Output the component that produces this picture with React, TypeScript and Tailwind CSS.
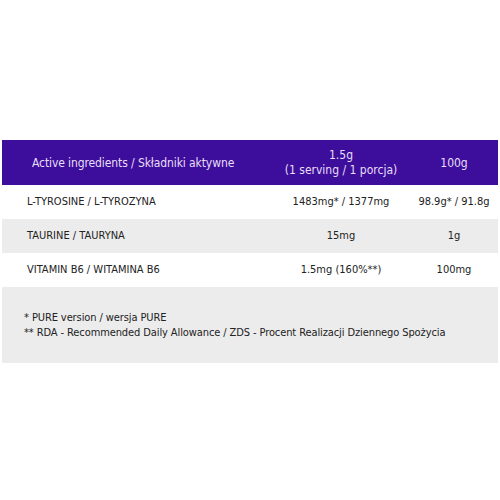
const rows = [
  { name: 'L-TYROSINE / L-TYROZYNA', serving: '1483mg* / 1377mg', per100: '98.9g* / 91.8g', gray: false },
  { name: 'TAURINE / TAURYNA', serving: '15mg', per100: '1g', gray: true },
  { name: 'VITAMIN B6 / WITAMINA B6', serving: '1.5mg (160%**)', per100: '100mg', gray: false },
]

export default function App() {
  return (
    <div
      className="h-[500px] w-[500px] bg-white pt-[140px] text-[11px] text-[#222]"
      style={{ fontFamily: 'Tahoma, "DejaVu Sans Condensed", sans-serif' }}
    >
      <div className="mx-[2px] w-[496px]">
        <div className="grid h-[45px] grid-cols-[270px_138px_1fr] items-center bg-[#3d0e9c] text-[12px] text-[#e8def7]">
          <div className="pl-[30px] tracking-[-0.1px]">Active ingredients / Składniki aktywne</div>
          <div className="text-center leading-[15px]">
            1.5g
            <br />
            (1 serving / 1 porcja)
          </div>
          <div className="text-center">100g</div>
        </div>
        {rows.map((r) => (
          <div
            key={r.name}
            className={`grid h-[34px] grid-cols-[270px_138px_1fr] items-center ${r.gray ? 'bg-[#ececec]' : 'bg-white'}`}
          >
            <div className="pl-[25px]">{r.name}</div>
            <div className="text-center">{r.serving}</div>
            <div className="text-center">{r.per100}</div>
          </div>
        ))}
        <div className="flex h-[76px] flex-col justify-center bg-[#ececec] pl-[22px] leading-[15px] tracking-[-0.1px]">
          <div>* PURE version / wersja PURE</div>
          <div>** RDA - Recommended Daily Allowance / ZDS - Procent Realizacji Dziennego Spożycia</div>
        </div>
      </div>
    </div>
  )
}
